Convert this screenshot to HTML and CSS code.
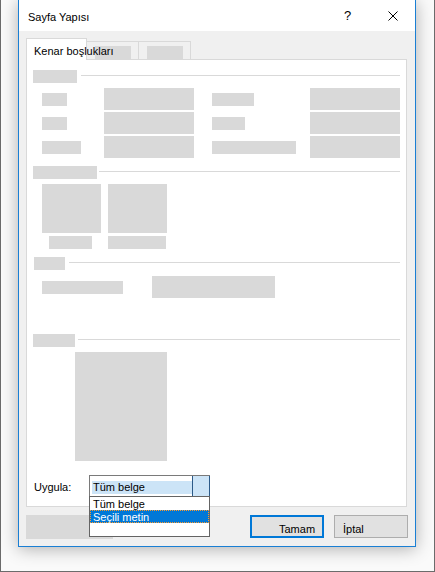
FILE: index.html
```html
<!DOCTYPE html>
<html lang="tr">
<head>
<meta charset="utf-8">
<title>Sayfa Yapısı</title>
<link rel="stylesheet" href="styles.css">
</head>
<body>
<div class="screen">
  <div class="dialog">
    <header class="titlebar">
      <span class="title">Sayfa Yapısı</span>
      <span class="caption-btn help">?</span>
      <span class="caption-btn">
        <svg class="close-icon" width="10" height="10" viewBox="0 0 10 10" aria-hidden="true">
          <path d="M0.5 0.5 L9.5 9.5 M9.5 0.5 L0.5 9.5" stroke="#000" stroke-width="1" fill="none"/>
        </svg>
      </span>
    </header>

    <div class="body">
      <div class="tabs">
        <div class="tab tab-active">Kenar boşlukları</div>
        <div class="tab"><span class="ph tab-ph"></span></div>
        <div class="tab"><span class="ph tab-ph"></span></div>
      </div>

      <div class="panel">
        <!-- Kenar boşlukları -->
        <div class="group-head">
          <span class="ph head-ph w44"></span><span class="rule"></span>
        </div>
        <div class="field-grid">
          <span class="ph label-ph w25"></span><span class="ph input-ph"></span><span></span>
          <span class="ph label-ph w42"></span><span class="ph input-ph"></span>

          <span class="ph label-ph w25"></span><span class="ph input-ph"></span><span></span>
          <span class="ph label-ph w33"></span><span class="ph input-ph"></span>

          <span class="ph label-ph w39"></span><span class="ph input-ph"></span><span></span>
          <span class="ph label-ph w84"></span><span class="ph input-ph"></span>
        </div>

        <!-- Yönlendirme -->
        <div class="group-head gap-sm">
          <span class="ph head-ph w64"></span><span class="rule"></span>
        </div>
        <div class="orient-grid">
          <span class="ph orient-box"></span>
          <span class="ph orient-box"></span>
          <span class="ph label-ph w43 orient-label-a"></span>
          <span class="ph label-ph w58"></span>
        </div>

        <!-- Sayfalar -->
        <div class="group-head head-indent">
          <span class="ph head-ph w31"></span><span class="rule"></span>
        </div>
        <div class="pages-row">
          <span class="ph label-ph w81"></span>
          <span class="ph pages-box"></span>
        </div>

        <!-- Önizleme -->
        <div class="group-head preview-head">
          <span class="ph head-ph w42"></span><span class="rule"></span>
        </div>
        <span class="ph preview-box"></span>

        <div class="apply-row">
          <span class="apply-label">Uygula:</span>
          <div class="combo">
            <span class="combo-value">Tüm belge</span>
            <span class="combo-btn"></span>
            <ul class="combo-list">
              <li class="combo-item">Tüm belge</li>
              <li class="combo-item selected">Seçili metin</li>
              <li class="combo-item"></li>
            </ul>
          </div>
        </div>
      </div>

      <div class="actions">
        <span class="ph default-ph"></span>
        <button class="btn btn-ok" type="button">Tamam</button>
        <button class="btn btn-cancel" type="button">İptal</button>
      </div>
    </div>
  </div>
</div>
</body>
</html>
```

FILE: styles.css
```css
* {
  box-sizing: border-box;
  margin: 0;
  padding: 0;
}

html,
body {
  width: 435px;
  height: 572px;
  overflow: hidden;
}

body {
  font-family: "Liberation Sans", Arial, sans-serif;
  font-size: 11px;
  color: #000;
  background: #fff;
}

.screen {
  width: 435px;
  height: 572px;
  border: 1px solid #6b6b6b;
  border-top: 0;
  background: #fafafa;
  padding-left: 17px;
}

/* dialog window */
.dialog {
  width: 398px;
  height: 547px;
  border: 1px solid #1a7fd4;
  border-top: 0;
  background: #f0f0f0;
  box-shadow: 0 2px 16px rgba(0, 0, 0, 0.3);
  display: flex;
  flex-direction: column;
}

.titlebar {
  height: 31px;
  flex: none;
  background: #fff;
  display: flex;
  align-items: flex-start;
}

.title {
  flex: 1;
  padding: 10px 0 0 9px;
  line-height: 15px;
}

.caption-btn {
  width: 45px;
  height: 31px;
  display: flex;
  align-items: center;
  justify-content: center;
}

.help {
  font-size: 13px;
  padding-bottom: 1px;
}

.body {
  flex: 1;
  padding: 7px 8px 0 7px;
}

/* tabs */
.tabs {
  height: 21px;
  display: flex;
  align-items: flex-end;
}

.tab {
  width: 53px;
  height: 18px;
  margin-left: -1px;
  border: 1px solid #d9d9d9;
  border-bottom: 0;
  background: #f0f0f0;
  padding: 4px 0 0 8px;
}

.tab-active {
  width: 61px;
  height: 22px;
  margin-left: 0;
  align-self: flex-start;
  z-index: 1;
  background: #fff;
  padding: 5px 0 0 7px;
  line-height: 15px;
  white-space: nowrap;
}

.ph {
  display: block;
  background: #d9d9d9;
}

.tab-ph {
  width: 36px;
  height: 13px;
}

/* tab page */
.panel {
  width: 381px;
  height: 448px;
  border: 1px solid #d9d9d9;
  background: #fff;
  padding: 10px 6px 0 6px;
}

.group-head {
  display: flex;
  align-items: flex-start;
  gap: 4px;
}

.group-head.gap-sm {
  margin-top: 8px;
  gap: 2px;
}

.head-indent {
  margin-top: 8px;
  padding-left: 1px;
}

.preview-head {
  margin-top: 36px;
  gap: 3px;
}

.head-ph {
  height: 13px;
}

.rule {
  flex: 1;
  height: 1px;
  margin-top: 5px;
  background: #d9d9d9;
}

.label-ph {
  height: 13px;
}

.w25 { width: 25px; }
.w31 { width: 31px; }
.w33 { width: 33px; }
.w39 { width: 39px; }
.w42 { width: 42px; }
.w43 { width: 43px; }
.w44 { width: 44px; }
.w58 { width: 58px; }
.w64 { width: 64px; }
.w81 { width: 81px; }
.w84 { width: 84px; }

.field-grid {
  margin-top: 5px;
  display: grid;
  grid-template-columns: 71px 90px 18px 98px 90px;
  grid-auto-rows: 22px;
  row-gap: 2px;
  align-items: center;
}

.field-grid > .label-ph {
  margin-left: 9px;
}

.field-grid > .label-ph:nth-child(5n + 4) {
  margin-left: 0;
}

.input-ph {
  height: 22px;
}

.orient-grid {
  margin: 5px 0 0 9px;
  display: grid;
  grid-template-columns: 59px 59px;
  column-gap: 7px;
  row-gap: 3px;
}

.orient-box {
  height: 49px;
}

.orient-label-a {
  margin-left: 7px;
}

.pages-row {
  margin: 6px 0 0 9px;
  display: flex;
  align-items: center;
  gap: 29px;
  height: 22px;
}

.pages-box {
  width: 123px;
  height: 22px;
}

.preview-box {
  width: 92px;
  height: 109px;
  margin: 5px 0 0 42px;
}

/* apply-to combo box */
.apply-row {
  margin-top: 14px;
  height: 22px;
  display: flex;
  align-items: center;
}

.apply-label {
  width: 56px;
  padding: 3px 0 0 1px;
  line-height: 15px;
}

.combo {
  position: relative;
  width: 121px;
  height: 22px;
  border: 1px solid #7a7a7a;
  background: #fff;
  display: flex;
  align-items: center;
}

.combo-value {
  flex: 1;
  margin: 3px 0 0 2px;
  height: 13px;
  line-height: 13px;
  padding-left: 1px;
  background: #cce4f7;
}

.combo-btn {
  width: 18px;
  align-self: stretch;
  margin-right: -1px;
  margin-bottom: -1px;
  background: #cce4f7;
  border: 1px solid #2c5a88;
  border-top: 0;
}

.combo-list {
  position: absolute;
  top: 100%;
  left: -1px;
  width: 121px;
  height: 41px;
  z-index: 2;
  list-style: none;
  background: #fff;
  border: 1px solid #646464;
}

.combo-item {
  height: 13px;
  line-height: 13px;
  padding: 1px 0 0 3px;
}

.combo-item.selected {
  background: #0078d7;
  color: #fff;
  outline: 1px dotted #ff9a2a;
  outline-offset: -1px;
}

/* dialog buttons */
.actions {
  margin: 8px -1px 0 0;
  display: flex;
  align-items: flex-start;
}

.default-ph {
  width: 87px;
  height: 24px;
}

.btn {
  width: 74px;
  height: 23px;
  font: inherit;
  color: #000;
  background: #e1e1e1;
  border: 1px solid #adadad;
  text-align: left;
  line-height: 15px;
  padding-top: 5px;
  padding-bottom: 0;
}

.btn-ok {
  margin-left: auto;
  border: 2px solid #0078d7;
  padding-left: 27px;
}

.btn-cancel {
  margin-left: 10px;
  padding-left: 8px;
}
```
